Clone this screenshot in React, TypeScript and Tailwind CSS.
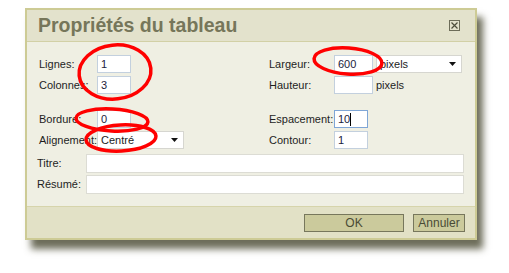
import React from "react";

const font = { fontFamily: '"Liberation Sans", Arial, sans-serif' };

function TextBox({ value, w, focused, caret }: { value?: string; w: string; focused?: boolean; caret?: boolean }) {
  return (
    <div
      className={`${w} h-[18px] bg-white border flex items-center pl-[3px] text-[11px] text-[#1c1c3c] ${
        focused ? "border-[#7fa6d6]" : "border-[#c3d0de]"
      }`}
    >
      {value}
      {caret && <span className="w-px h-[13px] bg-black" />}
    </div>
  );
}

function Select({ value, w }: { value: string; w: string }) {
  return (
    <div className={`${w} h-[18px] bg-white border border-[#d6d6d0] flex items-center justify-between pl-[3px] pr-[5px] text-[11px] text-[#1c1c1c]`}>
      <span>{value}</span>
      <svg width="7" height="4" viewBox="0 0 7 4">
        <path d="M0 0h7L3.5 4z" fill="#111" />
      </svg>
    </div>
  );
}

function Label({ text, w }: { text: string; w: string }) {
  return <div className={`${w} shrink-0 whitespace-nowrap text-[11px] text-[#1e1e1e]`}>{text}</div>;
}

export default function App() {
  return (
    <div className="relative min-h-screen w-[509px] h-[273px] bg-white overflow-hidden" style={font}>
      <div className="pl-[25px] pt-[8px]">
        <div className="w-[452px] border-2 border-[#cdcb95] bg-[#efefe3] shadow-[6px_9px_7px_rgba(60,60,35,0.75)]">
          {/* Header */}
          <div className="h-[32px] bg-[#e3e2cc] border-b border-[#d2d0a6] flex items-center justify-between pl-[11px] pr-[15px]">
            <div className="text-[19.5px] font-bold text-[#76765a] leading-none">Propriétés du tableau</div>
            <div className="w-[11px] h-[11px] border border-[#6c6c58] flex items-center justify-center">
              <svg width="7" height="7" viewBox="0 0 7 7">
                <path d="M0.5 0.5L6.5 6.5M6.5 0.5L0.5 6.5" stroke="#4e4e3c" strokeWidth="1.2" />
              </svg>
            </div>
          </div>

          {/* Body */}
          <div className="pt-[13px] pb-[12px] pl-[12px] pr-[11px] flex flex-col">
            <div className="flex items-center">
              <div className="w-[230px] flex items-center">
                <Label text="Lignes:" w="w-[58px]" />
                <TextBox value="1" w="w-[34px]" />
              </div>
              <div className="flex items-center">
                <Label text="Largeur:" w="w-[65px]" />
                <TextBox value="600" w="w-[39px]" />
                <div className="ml-[3px]">
                  <Select value="pixels" w="w-[86px]" />
                </div>
              </div>
            </div>
            <div className="flex items-center mt-[3px]">
              <div className="w-[230px] flex items-center">
                <Label text="Colonnes:" w="w-[58px]" />
                <TextBox value="3" w="w-[34px]" />
              </div>
              <div className="flex items-center">
                <Label text="Hauteur:" w="w-[65px]" />
                <TextBox w="w-[39px]" />
                <span className="ml-[3px] text-[11px] text-[#1e1e1e]">pixels</span>
              </div>
            </div>
            <div className="flex items-center mt-[16px]">
              <div className="w-[230px] flex items-center">
                <Label text="Bordure:" w="w-[58px]" />
                <TextBox value="0" w="w-[34px]" />
              </div>
              <div className="flex items-center">
                <Label text="Espacement:" w="w-[65px]" />
                <TextBox value="10" w="w-[34px]" focused caret />
              </div>
            </div>
            <div className="flex items-center mt-[3px]">
              <div className="w-[230px] flex items-center">
                <Label text="Alignement:" w="w-[58px]" />
                <Select value="Centré" w="w-[87px]" />
              </div>
              <div className="flex items-center">
                <Label text="Contour:" w="w-[65px]" />
                <TextBox value="1" w="w-[34px]" />
              </div>
            </div>
            <div className="flex items-center mt-[5px] -ml-[2px]">
              <Label text="Titre:" w="w-[49px]" />
              <div className="w-[378px] h-[19px] bg-white border border-[#dcdcd4]" />
            </div>
            <div className="flex items-center mt-[2px] -ml-[2px]">
              <Label text="Résumé:" w="w-[49px]" />
              <div className="w-[378px] h-[19px] bg-white border border-[#dcdcd4]" />
            </div>
          </div>

          {/* Footer */}
          <div className="h-[32px] bg-[#e2e1c6] border-t border-[#d6d4ab] flex items-start justify-end pt-[7px] pr-[10px] gap-[9px]">
            <button className="w-[100px] h-[18px] bg-[#cbca9c] border border-[#77775c] text-[12px] text-[#4a4a36] leading-none">OK</button>
            <button className="w-[52px] h-[18px] bg-[#cbca9c] border border-[#77775c] text-[12px] text-[#4a4a36] leading-none">Annuler</button>
          </div>
        </div>
      </div>

      {/* Red annotation circles */}
      <svg className="absolute inset-0 pointer-events-none" width="509" height="273" viewBox="0 0 509 273">
        <g fill="none" stroke="#ff0000" strokeWidth="3.5">
          <ellipse cx="115" cy="72" rx="36" ry="27" transform="rotate(-6 115 72)" />
          <ellipse cx="112" cy="120" rx="36" ry="11" transform="rotate(3 112 120)" />
          <ellipse cx="121" cy="138" rx="35" ry="13" transform="rotate(-3 121 138)" />
          <ellipse cx="348" cy="61" rx="34" ry="13" transform="rotate(4 348 61)" />
        </g>
      </svg>
    </div>
  );
}
